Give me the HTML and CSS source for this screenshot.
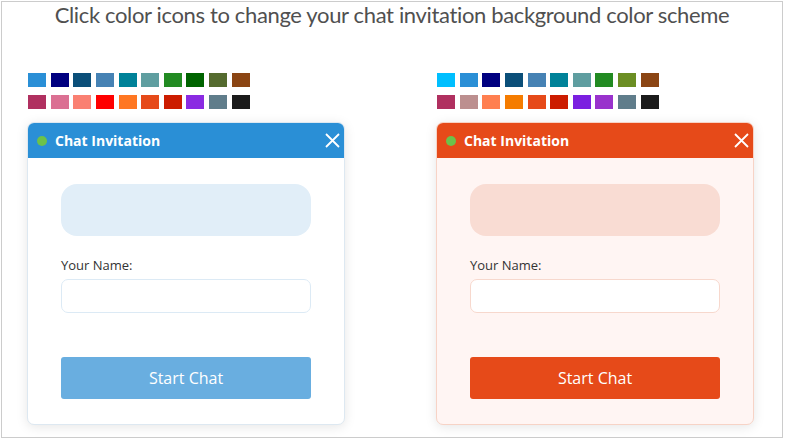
FILE: index.html
```html
<!DOCTYPE html>
<html lang="en">
<head>
    <meta charset="UTF-8">
    <meta name="viewport" content="width=device-width, initial-scale=1.0">
    <title>Chat Invitation Color Schemes</title>
    <link rel="stylesheet" href="styles.css">
</head>
<body>
    <div class="frame">
        <h1 class="title">Click color icons to change your chat invitation background color scheme</h1>

        <div class="columns">
            <div class="column">
                <div class="swatches">
                    <div class="swatch-row">
                        <span class="swatch" style="background:#2a8fd6"></span>
                        <span class="swatch" style="background:#000080"></span>
                        <span class="swatch" style="background:#0b4f79"></span>
                        <span class="swatch" style="background:#4682b4"></span>
                        <span class="swatch" style="background:#008299"></span>
                        <span class="swatch" style="background:#5f9ea0"></span>
                        <span class="swatch" style="background:#228b22"></span>
                        <span class="swatch" style="background:#006400"></span>
                        <span class="swatch" style="background:#556b2f"></span>
                        <span class="swatch" style="background:#8b4513"></span>
                    </div>
                    <div class="swatch-row">
                        <span class="swatch" style="background:#b03060"></span>
                        <span class="swatch" style="background:#db7093"></span>
                        <span class="swatch" style="background:#fa8072"></span>
                        <span class="swatch" style="background:#ff0000"></span>
                        <span class="swatch" style="background:#ff7722"></span>
                        <span class="swatch" style="background:#e64a19"></span>
                        <span class="swatch" style="background:#cc1c00"></span>
                        <span class="swatch" style="background:#8a2be2"></span>
                        <span class="swatch" style="background:#607d8b"></span>
                        <span class="swatch" style="background:#1b1b1b"></span>
                    </div>
                </div>

                <div class="chat-card theme-blue">
                    <div class="chat-header">
                        <span class="status-dot"></span>
                        <span class="chat-title">Chat Invitation</span>
                        <svg class="close-icon" width="15" height="15" viewBox="0 0 15 15">
                            <path d="M1 1 L14 14 M14 1 L1 14" stroke="#fff" stroke-width="1.8" fill="none"/>
                        </svg>
                    </div>
                    <div class="chat-body">
                        <div class="bubble"></div>
                        <label class="field-label">Your Name:</label>
                        <input class="field-input" type="text">
                        <button class="start-button">Start Chat</button>
                    </div>
                </div>
            </div>

            <div class="column">
                <div class="swatches">
                    <div class="swatch-row">
                        <span class="swatch" style="background:#00bfff"></span>
                        <span class="swatch" style="background:#2a8fd6"></span>
                        <span class="swatch" style="background:#000080"></span>
                        <span class="swatch" style="background:#0b4f79"></span>
                        <span class="swatch" style="background:#4682b4"></span>
                        <span class="swatch" style="background:#008299"></span>
                        <span class="swatch" style="background:#5f9ea0"></span>
                        <span class="swatch" style="background:#228b22"></span>
                        <span class="swatch" style="background:#6b8e23"></span>
                        <span class="swatch" style="background:#8b4513"></span>
                    </div>
                    <div class="swatch-row">
                        <span class="swatch" style="background:#b03060"></span>
                        <span class="swatch" style="background:#bc8f8f"></span>
                        <span class="swatch" style="background:#ff7f50"></span>
                        <span class="swatch" style="background:#f57c00"></span>
                        <span class="swatch" style="background:#e64a19"></span>
                        <span class="swatch" style="background:#cc1c00"></span>
                        <span class="swatch" style="background:#7b1fe0"></span>
                        <span class="swatch" style="background:#9932cc"></span>
                        <span class="swatch" style="background:#607d8b"></span>
                        <span class="swatch" style="background:#1b1b1b"></span>
                    </div>
                </div>

                <div class="chat-card theme-orange">
                    <div class="chat-header">
                        <span class="status-dot"></span>
                        <span class="chat-title">Chat Invitation</span>
                        <svg class="close-icon" width="15" height="15" viewBox="0 0 15 15">
                            <path d="M1 1 L14 14 M14 1 L1 14" stroke="#fff" stroke-width="1.8" fill="none"/>
                        </svg>
                    </div>
                    <div class="chat-body">
                        <div class="bubble"></div>
                        <label class="field-label">Your Name:</label>
                        <input class="field-input" type="text">
                        <button class="start-button">Start Chat</button>
                    </div>
                </div>
            </div>
        </div>
    </div>
</body>
</html>
```

FILE: styles.css
```css
* {
    margin: 0;
    padding: 0;
    box-sizing: border-box;
}

body {
    font-family: 'Open Sans', 'Liberation Sans', sans-serif;
    background: white;
    color: #333;
}

.frame {
    margin: 1px;
    width: 782px;
    height: 437px;
    border: 1px solid #cccccc;
}

.title {
    font-family: 'Lato', 'Open Sans', sans-serif;
    font-weight: 400;
    font-size: 22px;
    line-height: 26px;
    letter-spacing: -0.35px;
    color: #505050;
    text-align: center;
}

.columns {
    display: grid;
    grid-template-columns: 409px 1fr;
    padding-left: 25px;
    margin-top: 45px;
}

.swatches {
    display: flex;
    flex-direction: column;
    gap: 8px;
    margin-left: 1px;
    margin-bottom: 13px;
}

.swatch-row {
    display: flex;
    gap: 4.65px;
}

.swatch {
    width: 18px;
    height: 14px;
    display: block;
    cursor: pointer;
}

.chat-card {
    width: 318px;
    border: 1px solid #dde8f1;
    border-radius: 7px;
    overflow: hidden;
    background: white;
    box-shadow: 0 2px 12px rgba(0, 0, 0, 0.1);
}

.chat-header {
    height: 35px;
    display: flex;
    align-items: center;
    padding: 0 4px 0 9px;
    color: white;
}

.status-dot {
    width: 10px;
    height: 10px;
    border-radius: 50%;
    background: #6cc24a;
    margin-right: 8px;
}

.chat-title {
    font-size: 14px;
    font-weight: bold;
    flex: 1;
}

.close-icon {
    display: block;
    cursor: pointer;
}

.chat-body {
    padding: 26px 33px 25px;
    display: flex;
    flex-direction: column;
}

.bubble {
    height: 52px;
    border-radius: 16px;
}

.field-label {
    font-size: 13px;
    line-height: 18px;
    color: #333;
    margin-top: 20px;
}

.field-input {
    height: 34px;
    margin-top: 5px;
    border-radius: 7px;
    border: 1px solid #dceaf5;
    background: white;
    font-family: inherit;
}

.start-button {
    height: 42px;
    margin-top: 44px;
    border: none;
    border-radius: 3px;
    color: white;
    font-family: inherit;
    font-size: 16px;
    cursor: pointer;
}

.theme-blue .chat-header {
    background: #2a8fd6;
}

.theme-blue .bubble {
    background: #e1eef8;
}

.theme-blue .start-button {
    background: #69aee0;
}

.theme-orange {
    background: #fff5f3;
    border-color: #f7d3c6;
}

.theme-orange .chat-header {
    background: #e64a19;
}

.theme-orange .bubble {
    background: #f9dcd3;
}

.theme-orange .field-input {
    border-color: #f7d8cd;
}

.theme-orange .start-button {
    background: #e64a19;
}
```
